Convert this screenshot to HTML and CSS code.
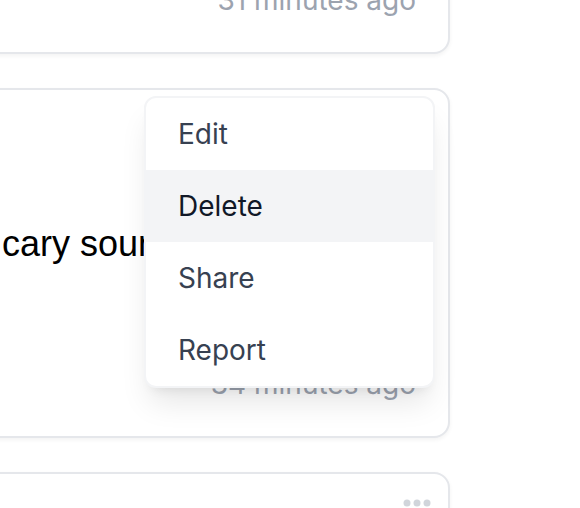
FILE: index.html
```html
<!DOCTYPE html>
<html lang="en">
<head>
<meta charset="utf-8">
<title>Feed</title>
<link rel="stylesheet" href="styles.css">
</head>
<body>
<div class="feed">
  <article class="card">
    <button class="more" aria-label="More options">
      <svg width="28" height="8" viewBox="0 0 28 8"><circle cx="4" cy="4" r="3.5"/><circle cx="14" cy="4" r="3.5"/><circle cx="24" cy="4" r="3.5"/></svg>
    </button>
    <p class="card-body">&nbsp;</p>
    <div class="card-time">31 minutes ago</div>
  </article>
  <article class="card">
    <button class="more" aria-label="More options">
      <svg width="28" height="8" viewBox="0 0 28 8"><circle cx="4" cy="4" r="3.5"/><circle cx="14" cy="4" r="3.5"/><circle cx="24" cy="4" r="3.5"/></svg>
    </button>
    <p class="card-body">cary sound</p>
    <div class="card-time">34 minutes ago</div>
    <ul class="menu">
      <li class="menu-item">Edit</li>
      <li class="menu-item active">Delete</li>
      <li class="menu-item">Share</li>
      <li class="menu-item">Report</li>
    </ul>
  </article>
  <article class="card">
    <button class="more" aria-label="More options">
      <svg width="28" height="8" viewBox="0 0 28 8"><circle cx="4" cy="4" r="3.5"/><circle cx="14" cy="4" r="3.5"/><circle cx="24" cy="4" r="3.5"/></svg>
    </button>
    <p class="card-body">&nbsp;</p>
    <div class="card-time">36 minutes ago</div>
  </article>
</div>
</body>
</html>
```
FILE: styles.css
```css
html, body {
  margin: 0;
  padding: 0;
  background: #ffffff;
  overflow: hidden;
}

.feed {
  display: flex;
  flex-direction: column;
  gap: 34px;
  width: 498px;
  margin-top: -296px;
  margin-left: -48px;
}

.card {
  position: relative;
  box-sizing: border-box;
  height: 350px;
  padding: 32px;
  display: flex;
  flex-direction: column;
  background: #ffffff;
  border: 2px solid #e5e7eb;
  border-radius: 16px;
  box-shadow: 0 2px 4px rgba(0, 0, 0, 0.05);
}

.more {
  position: absolute;
  top: 25px;
  right: 17px;
  padding: 0;
  margin: 0;
  border: 0;
  background: none;
  line-height: 0;
  fill: #d1d5db;
}

.card-body {
  margin: 98px 0 0 0;
  text-indent: 16px;
  font-family: "Liberation Sans", Arial, sans-serif;
  font-size: 36px;
  line-height: 48px;
  color: #000000;
  white-space: nowrap;
}

.card-time {
  margin-top: auto;
  text-align: right;
  font-family: Inter, "Noto Sans", sans-serif;
  font-size: 28px;
  line-height: 40px;
  color: #9ca3af;
}

.menu {
  position: absolute;
  top: 6px;
  right: 13px;
  width: 291px;
  box-sizing: border-box;
  margin: 0;
  padding: 0;
  list-style: none;
  background: #ffffff;
  border: 2px solid #f3f4f6;
  border-radius: 12px;
  overflow: hidden;
  box-shadow: 0 20px 30px -6px rgba(0, 0, 0, 0.1), 0 8px 12px -8px rgba(0, 0, 0, 0.1);
}

.menu-item {
  height: 72px;
  padding: 0 32px;
  font-family: Inter, "Noto Sans", sans-serif;
  font-size: 28px;
  line-height: 72px;
  color: #374151;
}

.menu-item.active {
  background: #f3f4f6;
  color: #111827;
}
```
